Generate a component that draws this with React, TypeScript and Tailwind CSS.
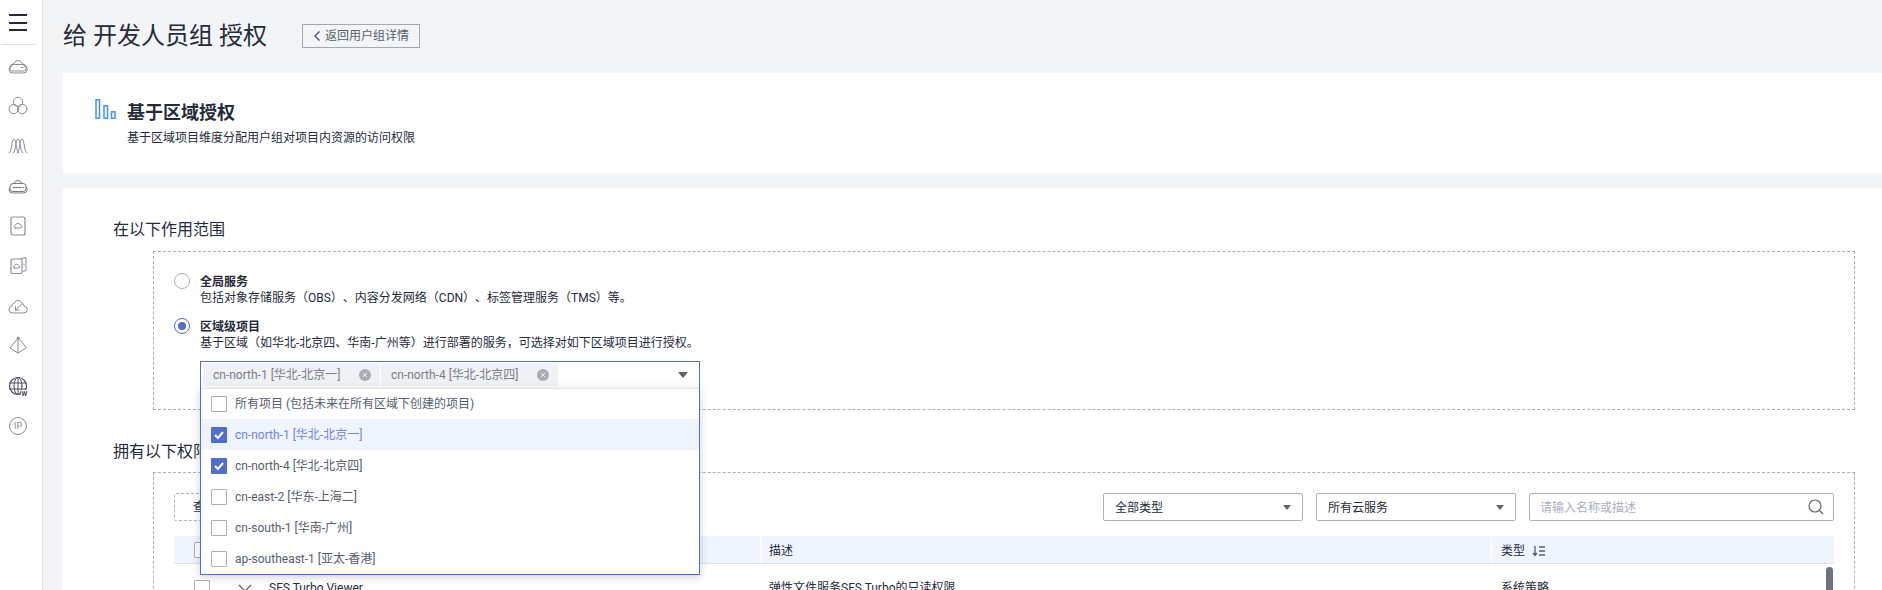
import React from "react";

const stroke = "#8a8d99";

function NavIcon({ children }: { children: React.ReactNode }) {
  return (
    <div className="flex h-[40px] w-[36px] items-center justify-center">
      <svg width="22" height="22" viewBox="0 0 22 22" fill="none" stroke={stroke} strokeWidth="1" strokeLinecap="round" strokeLinejoin="round">
        {children}
      </svg>
    </div>
  );
}

const cloudPath = "M5.500 18a3.500 3.500 0 0 1-.6-6.950 3 3 0 0 1 2.300-2.800A4 4 0 0 1 14.800 8.200a3 3 0 0 1 2.200 2.800 3.500 3.500 0 0 1-.5 7z";

const navIcons: React.ReactNode[] = [
  <g key="a"><path d={cloudPath} /><rect x="3" y="9.500" width="16" height="6.500" rx="2" /><path d="M14 12.500h2" /></g>,
  <g key="b"><circle cx="11" cy="7" r="4.700" /><circle cx="6.800" cy="14" r="4.700" /><circle cx="15.200" cy="14" r="4.700" /></g>,
  <g key="c"><path d="M2 18C5 18 4.500 4 7 4s2 14 5 14M6 18c3 0 2.500-14 5-14s2 14 5 14M10 18c3 0 2.500-14 5-14s2 14 5 14" /></g>,
  <g key="d" stroke="#787b87"><path d={cloudPath} /><rect x="3" y="8.500" width="16" height="8" rx="3" fill="#fff" /><path d="M6 12.500h8M16 12.500h1" /></g>,
  <g key="e"><rect x="4" y="2" width="14" height="18" rx="2" strokeWidth="1.200" /><path d="M8.500 13h5a1.300 1.300 0 0 0 .2-2.600 2.800 2.800 0 0 0-5.300-.2 1.400 1.400 0 0 0 .1 2.800z" /></g>,
  <g key="f"><path d="M14 3.500l5-1v13l-3 .8" /><path d="M17 9v1" /><rect x="4" y="4" width="11" height="14.500" rx="1.500" strokeWidth="1.200" /><path d="M7.500 13h4a1 1 0 0 0 .2-2.100 2.200 2.200 0 0 0-4.200-.1 1.100 1.100 0 0 0 0 2.200z" /></g>,
  <g key="g"><path d={cloudPath} /><path d="M15 9l-6.500 6M8.500 11.500V15H12" /></g>,
  <g key="h"><path d="M11 3L3 13l8 5 8-5zM11 3v15" /><circle cx="11" cy="3" r="1" fill={stroke} /></g>,
  <g key="i" stroke="#4b4f5c"><circle cx="11" cy="11" r="8.500" strokeWidth="1.200" /><ellipse cx="11" cy="11" rx="4" ry="8.500" /><path d="M2.500 8h17M2.500 14h17M11 2.500v17" /><rect x="14" y="15" width="8" height="7" fill="#fff" stroke="none" /><text x="14.200" y="21" fontSize="7" fontWeight="700" fill="#4b4f5c" stroke="none" fontFamily="Roboto">W</text></g>,
  <g key="j"><circle cx="11" cy="11" r="8.500" /><text x="7" y="14.300" fontSize="9" fill={stroke} stroke="none" fontFamily="Roboto">IP</text></g>,
];

function Sidebar() {
  return (
    <aside className="flex h-full w-[43px] shrink-0 flex-col border-r border-[#e3e4e8] bg-white">
      <div className="ml-[1px] flex h-[45px] w-[35px] flex-col gap-[5.500px] border-b border-[#dfe1e6] pl-[8px] pt-[14px]">
        <span className="h-[2px] w-[18px] bg-[#252b3a]" />
        <span className="h-[2px] w-[18px] bg-[#252b3a]" />
        <span className="h-[2px] w-[18px] bg-[#252b3a]" />
      </div>
      <div className="flex flex-col pt-[1px]">
        {navIcons.map((icon, i) => (
          <NavIcon key={i}>{icon}</NavIcon>
        ))}
      </div>
    </aside>
  );
}

function Checkbox({ checked }: { checked?: boolean }) {
  return checked ? (
    <span className="flex h-[16px] w-[16px] shrink-0 items-center justify-center rounded-[1px] bg-[#526ecc]">
      <svg width="12" height="12" viewBox="0 0 12 12" fill="none" stroke="#fff" strokeWidth="2">
        <path d="M2 6l3 3 5-6" />
      </svg>
    </span>
  ) : (
    <span className="block h-[16px] w-[16px] shrink-0 rounded-[1px] border border-[#adb0b8] bg-white" />
  );
}

function Radio({ checked }: { checked?: boolean }) {
  return (
    <span className={`flex h-[16px] w-[16px] shrink-0 items-center justify-center rounded-full border bg-white ${checked ? "border-[#526ecc]" : "border-[#adb0b8]"}`}>
      {checked && <span className="h-[8px] w-[8px] rounded-full bg-[#526ecc]" />}
    </span>
  );
}

function Tag({ label }: { label: string }) {
  return (
    <span className="flex h-[22px] w-[177px] items-center justify-between rounded-[1px] bg-[#f0f1f5] pl-[10px] pr-[9px] text-[12px] text-[#7a7d89]">
      {label}
      <span className="flex h-[12px] w-[12px] items-center justify-center rounded-full bg-[#a9acb5]">
        <svg width="8" height="8" viewBox="0 0 8 8" stroke="#eceef2" strokeWidth="1">
          <path d="M2 2l4 4M6 2l-4 4" />
        </svg>
      </span>
    </span>
  );
}

function Caret({ className }: { className: string }) {
  return (
    <svg width="10" height="6" viewBox="0 0 10 6" className={className}>
      <path d="M0 0h10L5 6z" fill="#5f6370" />
    </svg>
  );
}

const regions = [
  { label: "所有项目 (包括未来在所有区域下创建的项目)" },
  { label: "cn-north-1 [华北-北京一]", checked: true, active: true },
  { label: "cn-north-4 [华北-北京四]", checked: true },
  { label: "cn-east-2 [华东-上海二]" },
  { label: "cn-south-1 [华南-广州]" },
  { label: "ap-southeast-1 [亚太-香港]" },
];

function RegionSelect() {
  return (
    <div className="relative mt-[10px] w-[500px]">
      <div className="flex h-[28px] items-center gap-[1px] border border-[#526ecc] bg-white pl-[2px] pr-[11px]">
        <Tag label="cn-north-1 [华北-北京一]" />
        <Tag label="cn-north-4 [华北-北京四]" />
        <Caret className="ml-auto" />
      </div>
      <div className="absolute left-0 top-[27px] z-10 w-[500px] border border-t-0 border-[#526ecc] bg-white shadow-[0_2px_8px_rgba(37,43,58,0.22)]">
        {regions.map((r, i) => (
          <div key={r.label} className={`flex h-[31px] items-center gap-[8px] pl-[10px] text-[12px] ${i === 0 ? "border-t border-[#e3e4e8]" : ""} ${r.active ? "bg-[#f0f4fe] text-[#6e85e0]" : "text-[#575d6c]"}`}>
            <Checkbox checked={r.checked} />
            {r.label}
          </div>
        ))}
      </div>
    </div>
  );
}

function FilterSelect({ label }: { label: string }) {
  return (
    <div className="flex h-[28px] w-[200px] items-center justify-between rounded-[2px] border border-[#adb0b8] bg-white pl-[11px] pr-[11px] pt-[1px] text-[12px] text-[#252b3a]">
      {label}
      <Caret className="h-[5px] w-[8px]" />
    </div>
  );
}

function PermissionBox() {
  return (
    <div className="mr-[27px] ml-[90px] mt-[10px] border border-dashed border-[#adb0b8] px-[20px] pt-[20px]">
      <div className="flex h-[28px] items-center justify-between">
        <div className="flex h-[28px] w-[120px] items-center rounded-[2px] border border-dashed border-[#adb0b8] pl-[18px] text-[12px] text-[#252b3a]">查看已选</div>
        <div className="flex gap-[13px]">
          <FilterSelect label="全部类型" />
          <FilterSelect label="所有云服务" />
          <div className="flex h-[28px] w-[305px] items-center justify-between rounded-[2px] border border-[#adb0b8] bg-white pl-[10px] pr-[9px] text-[12px] text-[#adb0b8]">
            <span className="pt-[1px]">请输入名称或描述</span>
            <svg width="16" height="16" viewBox="0 0 16 16" fill="none" stroke="#5f6370" strokeWidth="1.200">
              <circle cx="7" cy="7" r="6" />
              <path d="M11.500 11.500L15 15" />
            </svg>
          </div>
        </div>
      </div>
      <div className="relative mt-[15px]">
        <div className="grid h-[28px] grid-cols-[586px_731px_1fr] border-b border-[#e0e1e6] bg-[#f0f4fe] text-[12px] text-[#252b3a]">
          <div className="flex items-center pl-[20px]"><Checkbox /></div>
          <div className="flex items-center border-l border-white pl-[8px] pt-[2px]">描述</div>
          <div className="flex items-center border-l border-white pl-[9px] pt-[2px]">
            类型
            <svg width="14" height="12" viewBox="0 0 14 12" fill="none" stroke="#575d6c" className="ml-[7px]" strokeWidth="1.300">
              <path d="M3 1v9M1 8l2 2.500L5 8M7 2h6M7 6h6M7 10h6" />
            </svg>
          </div>
        </div>
        <div className="grid h-[48px] grid-cols-[586px_731px_1fr] text-[12px] text-[#252b3a]">
          <div className="flex items-center pl-[20px]">
            <Checkbox />
            <svg width="14" height="8" viewBox="0 0 14 8" fill="none" stroke="#575d6c" strokeWidth="1.200" className="ml-[28px]">
              <path d="M1 1l6 6 6-6" />
            </svg>
            <span className="ml-[17px]">SFS Turbo Viewer</span>
          </div>
          <div className="flex items-center pl-[9px]">弹性文件服务SFS Turbo的只读权限</div>
          <div className="flex items-center pl-[10px]">系统策略</div>
        </div>
        <div className="absolute right-[1px] top-[31px] h-[40px] w-[7px] rounded-full bg-[#6c7080]" />
      </div>
    </div>
  );
}

export default function App() {
  return (
    <div className="flex h-[590px] w-[1882px] overflow-hidden bg-[#f3f4f6] font-['Roboto','Noto_Sans_CJK_SC',sans-serif] text-[#252b3a]">
      <Sidebar />
      <main className="min-w-0 flex-1 pl-[20px]">
        <div className="flex h-[73px] items-center pb-[1px]">
          <h1 className="w-[239px] whitespace-pre text-[24px] leading-[32px]">给 开发人员组 授权</h1>
          <button className="flex h-[24px] w-[118px] items-center border border-[#a3a6b3] pl-[10px] text-[12px] text-[#575d6c]">
            <svg width="8" height="12" viewBox="0 0 8 12" fill="none" stroke="#575d6c" strokeWidth="1.500" className="mr-[4px]">
              <path d="M6.500 1.500L2 6l4.500 4.500" />
            </svg>
            返回用户组详情
          </button>
        </div>
        <section className="flex h-[100px] items-start bg-white pl-[32px] pt-[26px]">
          <svg width="21" height="20" viewBox="0 0 21 20" fill="none" stroke="#4291ff" strokeWidth="1.500" className="shrink-0">
            <rect x="1" y="0.800" width="3.500" height="18.500" />
            <rect x="9" y="6.800" width="3.500" height="12.500" />
            <rect x="16.500" y="12.800" width="3.500" height="6.500" />
          </svg>
          <div className="ml-[11px] mt-[1px]">
            <h2 className="text-[18px] font-bold leading-[26px]">基于区域授权</h2>
            <p className="mt-[3px] text-[12px] leading-[18px]">基于区域项目维度分配用户组对项目内资源的访问权限</p>
          </div>
        </section>
        <section className="mt-[15px] h-[500px] bg-white pt-[32px]">
          <h3 className="pl-[50px] text-[16px] leading-[20px]">在以下作用范围</h3>
          <div className="mr-[27px] ml-[90px] mt-[11px] h-[159px] border border-dashed border-[#adb0b8] pl-[20px] pt-[21px]">
            <div className="flex gap-[10px]">
              <Radio />
              <div className="pt-[1px] text-[12px] leading-[16px]">
                <div className="font-bold">全局服务</div>
                <div className="[text-spacing-trim:space-all]">包括对象存储服务（OBS）、内容分发网络（CDN）、标签管理服务（TMS）等。</div>
              </div>
            </div>
            <div className="mt-[12px] flex gap-[10px]">
              <Radio checked />
              <div className="pt-[1px] text-[12px] leading-[16px]">
                <div className="font-bold">区域级项目</div>
                <div>基于区域（如华北-北京四、华南-广州等）进行部署的服务，可选择对如下区域项目进行授权。</div>
              </div>
            </div>
            <div className="pl-[26px]">
              <RegionSelect />
            </div>
          </div>
          <h3 className="mt-[32px] pl-[50px] text-[16px] leading-[20px]">拥有以下权限</h3>
          <PermissionBox />
        </section>
      </main>
    </div>
  );
}
